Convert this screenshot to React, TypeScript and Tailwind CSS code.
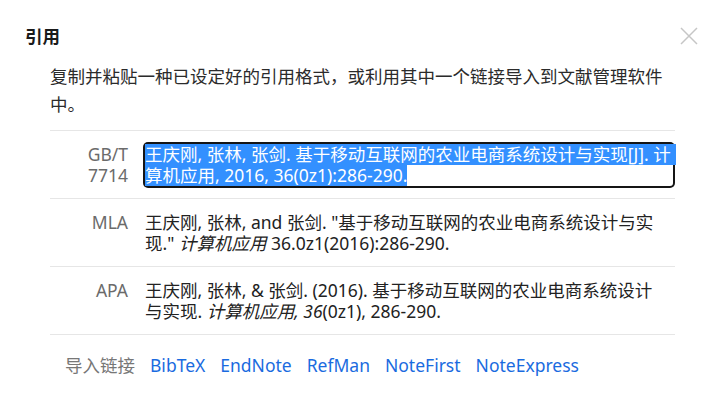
import React from "react";

const FONT = '"Noto Sans", "Noto Sans CJK SC", sans-serif';

function CloseIcon() {
  return (
    <svg width="18" height="18" viewBox="0 0 18 18" fill="none">
      <path d="M1 1L17 17M17 1L1 17" stroke="#c6c6c6" strokeWidth="1.5" />
    </svg>
  );
}

function Row({ label, children }: { label: React.ReactNode; children: React.ReactNode }) {
  return (
    <div className="flex border-b border-[#e6e6e6] pt-[13px] pb-[12px] pl-[15px]">
      <div className="w-[63px] shrink-0 text-right text-[#6b6b6b] leading-[21px]">{label}</div>
      <div className="ml-[17px] flex-1 text-[#222] leading-[21px]">{children}</div>
    </div>
  );
}

export default function App() {
  return (
    <div
      className="w-[725px] h-[415px] bg-white pt-[24px] text-[17.5px] overflow-hidden"
      style={{ fontFamily: FONT }}
    >
      <div className="flex items-center justify-between pl-[25px] pr-[27px] h-[24px]">
        <div className="font-bold text-[#1a1a1a] leading-[24px]">引用</div>
        <CloseIcon />
      </div>
      <div className="mx-[50px]">
        <div className="mt-[14px] pb-[12px] leading-[28px] text-[#2b2b2b] border-b border-[#e6e6e6]">
          <div className="whitespace-nowrap">复制并粘贴一种已设定好的引用格式，或利用其中一个链接导入到文献管理软件</div>
          <div>中。</div>
        </div>
        <Row
          label={
            <>
              <div>GB/T</div>
              <div>7714</div>
            </>
          }
        >
          <div className="rounded-[3px] ring-2 ring-[#151515] mr-[2px]">
            <div className="bg-[#3390ff] text-white whitespace-nowrap h-[21px] -mr-[3px]">
              王庆刚, 张林, 张剑. 基于移动互联网的农业电商系统设计与实现[J]. 计
            </div>
            <div className="h-[21px]">
              <span className="inline-block h-[21px] bg-[#3390ff] text-white whitespace-nowrap">
                算机应用, 2016, 36(0z1):286-290.
              </span>
            </div>
          </div>
        </Row>
        <Row label="MLA">
          <div className="whitespace-nowrap">王庆刚, 张林, and 张剑. "基于移动互联网的农业电商系统设计与实</div>
          <div className="whitespace-nowrap">
            现." <i>计算机应用</i> 36.0z1(2016):286-290.
          </div>
        </Row>
        <Row label="APA">
          <div className="whitespace-nowrap">王庆刚, 张林, &amp; 张剑. (2016). 基于移动互联网的农业电商系统设计</div>
          <div className="whitespace-nowrap">
            与实现. <i>计算机应用, 36</i>(0z1), 286-290.
          </div>
        </Row>
        <div className="flex items-center pt-[20px] pl-[15px] leading-[21px]">
          <span className="text-[#777] mr-[15px]">导入链接</span>
          <div className="flex gap-[15px] text-[#1a6be0]">
            <a>BibTeX</a>
            <a>EndNote</a>
            <a>RefMan</a>
            <a>NoteFirst</a>
            <a>NoteExpress</a>
          </div>
        </div>
      </div>
    </div>
  );
}
